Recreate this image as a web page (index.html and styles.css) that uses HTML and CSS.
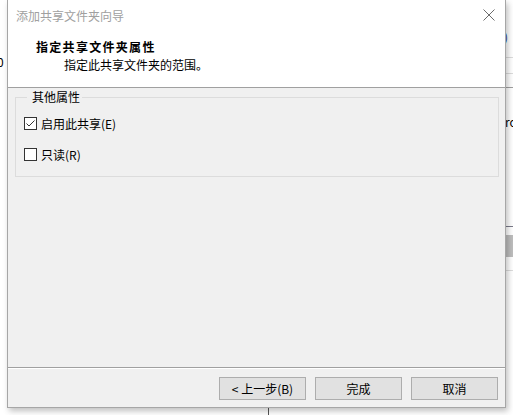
FILE: index.html
```html
<!DOCTYPE html>
<html lang="zh-CN">
<head>
  <meta charset="UTF-8" />
  <title>添加共享文件夹向导</title>
  <link rel="stylesheet" href="styles.css">
</head>
<body>

<!-- 背后窗口的残留部分 -->
<div class="behind">
  <span class="bg-zero">0</span>
  <span class="bg-paren">)</span>
  <span class="bg-ro">ro</span>
  <div class="bg-line l1"></div>
  <div class="bg-line l2"></div>
  <div class="bg-line l3"></div>
  <div class="bg-line l4"></div>
  <div class="bg-block"></div>
  <div class="bg-line l5"></div>
  <div class="bg-vline"></div>
</div>

<div class="dialog">
  <div class="titlebar">
    <span class="title">添加共享文件夹向导</span>
    <svg class="close" width="12" height="12" viewBox="0 0 12 12">
      <path d="M0.5 0.5 L11.5 11.5 M11.5 0.5 L0.5 11.5" stroke="#6b6b6b" stroke-width="1" fill="none" />
    </svg>
  </div>

  <div class="header">
    <h1>指定共享文件夹属性</h1>
    <p>指定此共享文件夹的范围。</p>
  </div>

  <div class="content">
    <fieldset class="group">
      <legend>其他属性</legend>
      <label class="check">
        <span class="box checked">
          <svg width="11" height="11" viewBox="0 0 11 11">
            <path d="M1.5 5.5 L4 8 L9.5 2.5" stroke="#333" stroke-width="1" fill="none" />
          </svg>
        </span>
        启用此共享(E)
      </label>
      <label class="check">
        <span class="box"></span>
        只读(R)
      </label>
    </fieldset>
  </div>

  <div class="footer">
    <button>&lt; 上一步(B)</button>
    <button>完成</button>
    <button>取消</button>
  </div>
</div>

</body>
</html>
```

FILE: styles.css
```css
* {
  box-sizing: border-box;
  margin: 0;
  padding: 0;
}

body {
  font-family: "Noto Sans CJK SC", "Microsoft YaHei", sans-serif;
  font-size: 12px;
  color: #000;
  background: #fff;
  width: 513px;
  height: 415px;
  overflow: hidden;
  position: relative;
}

/* 背景窗口 */
.behind span {
  position: absolute;
  font-size: 12px;
  line-height: 14px;
}

.bg-zero {
  left: -3px;
  top: 55px;
}

.bg-paren {
  left: 504px;
  top: 30px;
  color: #1a3c8c;
}

.bg-ro {
  left: 505px;
  top: 115px;
}

.bg-line {
  position: absolute;
  left: 506px;
  width: 7px;
  height: 1px;
  background: #dcdcdc;
}

.l1 { top: 57px; }
.l2 { top: 73px; }
.l3 { top: 87px; background: #a0a0a0; }
.l4 { top: 226px; background: #7a7a8a; }
.l5 { top: 270px; }

.bg-block {
  position: absolute;
  left: 506px;
  top: 235px;
  width: 7px;
  height: 22px;
  background: #bdbdbd;
}

.bg-vline {
  position: absolute;
  left: 268px;
  top: 405px;
  width: 1px;
  height: 10px;
  background: #555;
}

/* 对话框 */
.dialog {
  position: relative;
  margin-left: 7px;
  width: 499px;
  height: 408px;
  background: #f0f0f0;
  border: 1px solid #a6a6a6;
  border-top: none;
  box-shadow: 2px 3px 6px rgba(0, 0, 0, 0.25);
  display: flex;
  flex-direction: column;
}

.titlebar {
  height: 30px;
  background: #fff;
  display: flex;
  align-items: center;
  justify-content: space-between;
  padding: 0 10px 0 8px;
}

.title {
  color: #a0a0a0;
  font-size: 12px;
}

.close {
  margin-top: -1px;
}

.header {
  height: 58px;
  background: #fff;
  border-bottom: 1px solid #a0a0a0;
  padding: 8px 0 0 28px;
}

.header h1 {
  font-size: 12px;
  font-weight: bold;
  letter-spacing: 1.3px;
  line-height: 17px;
}

.header p {
  margin-top: 1px;
  padding-left: 28px;
  line-height: 17px;
}

.content {
  flex: 1;
  padding: 1px 6px 0 7px;
}

.group {
  border: 1px solid #dcdcdc;
  height: 88px;
  padding: 10px 0 0 8px;
}

.group legend {
  margin-left: 3px;
  padding: 0 2px 0 5px;
  line-height: 16px;
}

.check {
  display: flex;
  align-items: center;
  height: 17px;
  gap: 4px;
  margin-bottom: 14px;
}

.box {
  width: 13px;
  height: 13px;
  border: 1px solid #333;
  background: #fff;
  display: flex;
  align-items: center;
  justify-content: center;
}

.footer {
  height: 40px;
  border-top: 1px solid #a0a0a0;
  box-shadow: inset 0 1px 0 #fff;
  display: flex;
  justify-content: flex-end;
  gap: 9px;
  padding: 9px 7px 0 0;
}

.footer button {
  width: 87px;
  height: 23px;
  background: #e1e1e1;
  border: 1px solid #adadad;
  font-family: inherit;
  font-size: 12px;
  color: #000;
}
```
